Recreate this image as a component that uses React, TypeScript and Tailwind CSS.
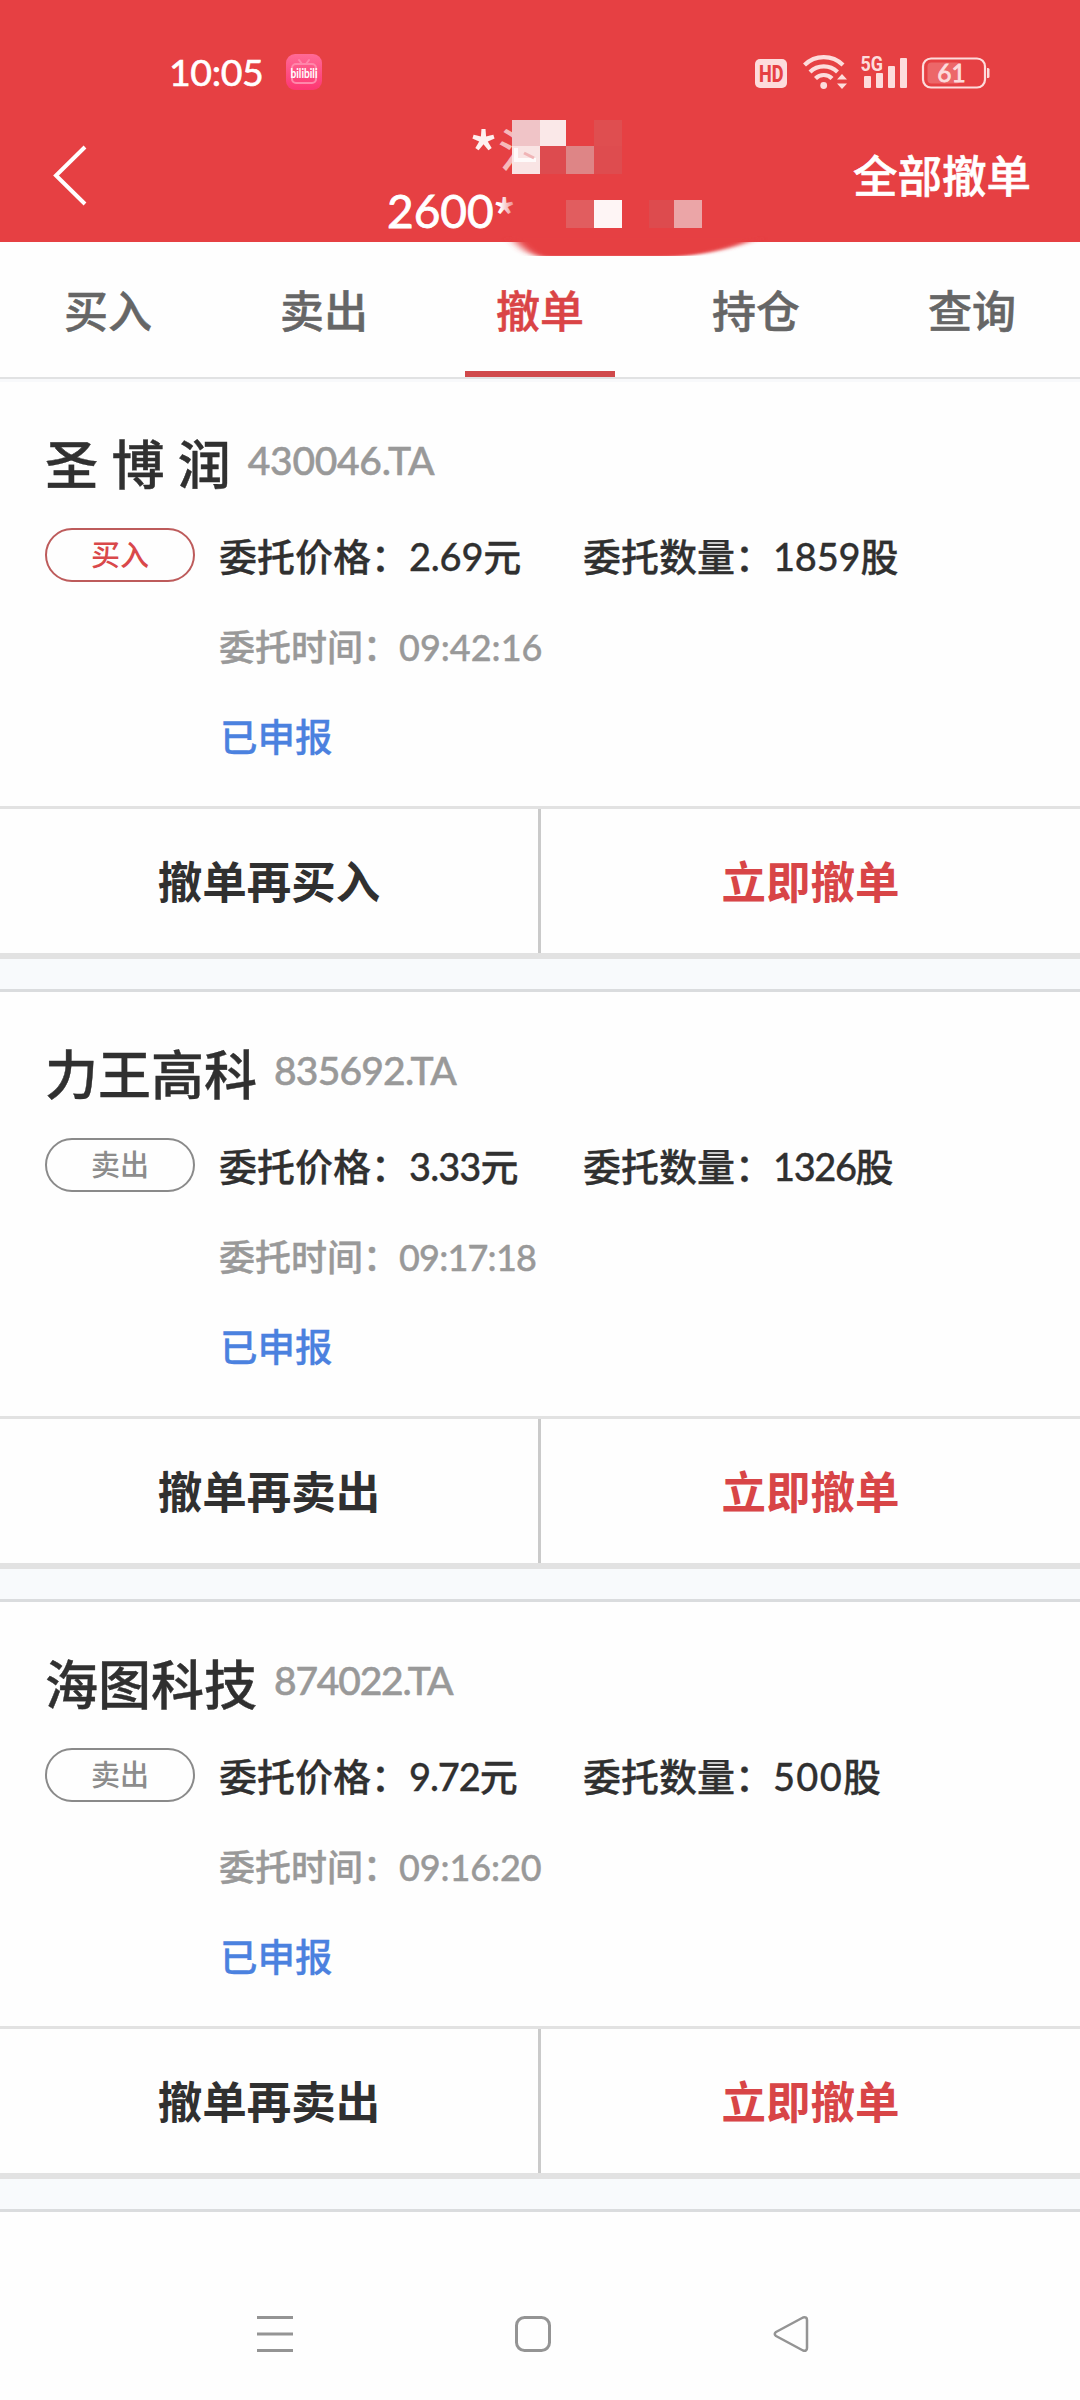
import React from 'react';

interface Order {
  name: string;
  code: string;
  side: '买入' | '卖出';
  price: string;
  quantity: string;
  time: string;
  tracking: { code: string; price: string; quantity: string; time: string };
}

const ORDERS: Order[] = [
  {
    name: '圣 博 润', code: '430046.TA', side: '买入', price: '2.69元', quantity: '1859股', time: '09:42:16',
    tracking: { code: 'tracking-[-0.3px]', price: 'tracking-[-0.2px]', quantity: 'tracking-[-0.2px]', time: 'tracking-normal' },
  },
  {
    name: '力王高科', code: '835692.TA', side: '卖出', price: '3.33元', quantity: '1326股', time: '09:17:18',
    tracking: { code: 'tracking-[-0.8px]', price: 'tracking-[-0.9px]', quantity: 'tracking-[-1.4px]', time: 'tracking-[-0.8px]' },
  },
  {
    name: '海图科技', code: '874022.TA', side: '卖出', price: '9.72元', quantity: '500股', time: '09:16:20',
    tracking: { code: 'tracking-[-1.2px]', price: 'tracking-[-1.1px]', quantity: 'tracking-[1.3px]', time: 'tracking-[-0.1px]' },
  },
];

const TABS = ['买入', '卖出', '撤单', '持仓', '查询'];
const ACTIVE_TAB = '撤单';

const StatusBar: React.FC = () => (
  <div className="flex h-[102px] items-center pt-[43px] pl-[169px] pr-[90px]">
    <span className="w-[117px] text-[37.500px] leading-[56px] tracking-[-0.4px] [-webkit-text-stroke:0.6px] -mt-[2px]">10:05</span>
    <svg className="mb-[1px] overflow-visible" width="36" height="36" viewBox="0 0 36 36">
      <defs>
        <linearGradient id="app" x1="0" y1="0" x2="0" y2="1">
          <stop offset="0" stopColor="#ff6a96" />
          <stop offset="1" stopColor="#fd3672" />
        </linearGradient>
      </defs>
      <rect width="36" height="36" rx="9" fill="url(#app)" />
      <g fill="none" stroke="#ff86aa" strokeWidth="2" strokeLinecap="round">
        <rect x="6" y="10" width="24" height="19" rx="4" />
        <path d="M13 6l3 4M23 6l-3 4" />
      </g>
      <text x="4.500" y="24" textLength="27" lengthAdjust="spacingAndGlyphs" fontSize="13" fontWeight="700" fill="#fff">bilibili</text>
    </svg>
    <svg className="ml-auto overflow-visible" width="236" height="40" viewBox="0 0 236 40" fill="#fddcdc">
      <rect x="1" y="6" width="32" height="29" rx="5" />
      <text x="5" y="29" textLength="24.500" lengthAdjust="spacingAndGlyphs" fontFamily="Roboto" fontSize="23" fontWeight="800" fill="#e64043">HD</text>
      <g fill="none" stroke="#fddcdc" strokeWidth="4.200">
        <path d="M50.500 12a27.500 27.500 0 0 1 38.500 0" />
        <path d="M56 19a19.500 19.500 0 0 1 27.500 0" />
        <path d="M61.500 25.500a11.500 11.500 0 0 1 16.500 0" />
      </g>
      <circle cx="69.700" cy="32.500" r="3.400" />
      <path d="M83 26.500l5-5.500 5 5.500zM83 30.500l5 5.500 5-5.500z" />
      <text x="106.500" y="17.500" textLength="22.500" lengthAdjust="spacingAndGlyphs" fontFamily="Roboto" fontSize="21" fontWeight="700">5G</text>
      <rect x="110" y="23" width="7" height="12" rx="1" />
      <rect x="122" y="20" width="7" height="15" rx="1" />
      <rect x="134" y="13" width="7" height="22" rx="1" />
      <rect x="146" y="5" width="7" height="30" rx="1" />
      <rect x="169" y="5.500" width="62" height="29" rx="8" fill="none" stroke="#fddcdc" strokeWidth="2.200" />
      <rect x="173.500" y="9.500" width="33" height="21" rx="4" fill="#ec6769" />
      <path d="M233 15h1q1.500 0 1.500 1.500v7q0 1.500-1.500 1.500h-1z" />
      <text x="197.500" y="28.500" textAnchor="middle" fontSize="24.500" stroke="#fddcdc" strokeWidth="0.8">61</text>
    </svg>
  </div>
);

const AccountMosaic: React.FC = () => (
  <svg className="absolute left-[500px] top-[110px]" width="270" height="146" viewBox="500 110 270 146">
    <defs>
      <filter id="soft" x="-10%" y="-60%" width="120%" height="220%">
        <feGaussianBlur stdDeviation="6 1" />
      </filter>
      <linearGradient id="smudge" x1="0" y1="0" x2="1" y2="0">
        <stop offset="0" stopColor="#e64043" stopOpacity="0" />
        <stop offset="1" stopColor="#e64043" />
      </linearGradient>
    </defs>
    <path d="M512 238H758Q715 256 664 257H545Q529 257 512 238z" fill="#e64043" filter="url(#soft)" />
    <rect x="500" y="190" width="22" height="42" fill="url(#smudge)" />
    <rect x="512" y="120" width="28" height="26" fill="#f0c4c7" />
    <rect x="540" y="120" width="26" height="26" fill="#fae8e8" />
    <rect x="594" y="120" width="28" height="26" fill="#df4e50" />
    <rect x="512" y="146" width="28" height="28" fill="#f9e4e4" />
    <rect x="540" y="146" width="26" height="28" fill="#dd4b4f" />
    <rect x="566" y="146" width="28" height="28" fill="#de8586" />
    <rect x="594" y="146" width="28" height="28" fill="#de4c4f" />
    <path d="M516 148V160H536" fill="none" stroke="#fff" strokeWidth="4" opacity="0.8" />
    <path d="M524 153l10 5" fill="none" stroke="#f0b4b6" strokeWidth="3" />
    <rect x="566" y="200" width="28" height="28" fill="#e15d5f" />
    <rect x="594" y="200" width="28" height="28" fill="#fef5f5" />
    <rect x="649" y="200" width="25" height="28" fill="#dd4b4e" />
    <rect x="674" y="200" width="28" height="28" fill="#eba5a7" />
  </svg>
);

const Header: React.FC = () => (
  <header className="relative h-[242px] bg-[#e64043] text-white">
    <StatusBar />
    <div className="flex h-[140px] pl-[52px] pr-[49px]">
      <svg className="mt-[43px] shrink-0" width="36" height="62" viewBox="0 0 36 62" fill="none" stroke="#fff" strokeWidth="4">
        <path d="M33 2L4 30.500L33 59" />
      </svg>
      <div className="ml-[299px] flex-1">
        <div className="flex h-[78px] pl-[82px] pt-[9px]">
          <span className="w-[29px] font-['Noto_Sans_CJK_SC'] text-[60px] font-medium leading-[80px] text-[#fef0f0]">*</span>
          <span className="text-[46px] font-medium leading-[76px] text-[#f6b9ba]">氵</span>
        </div>
        <div className="-mt-[1px] flex leading-[64px]">
          <span className="text-[46px] [-webkit-text-stroke:0.8px]">2600</span>
          <span className="-ml-[1px] mt-[3px] font-['Noto_Sans_CJK_SC'] text-[48px] font-medium">*</span>
        </div>
      </div>
      <button className="mt-[39px] h-[70px] text-[44.500px] font-medium leading-[70px] [-webkit-text-stroke:0.6px]">全部撤单</button>
    </div>
    <AccountMosaic />
  </header>
);

const Tabs: React.FC = () => (
  <nav className="grid h-[140px] grid-cols-5 border-b-[3px] border-[#f8f9fb]">
    {TABS.map((tab) => (
      <div
        key={tab}
        className={`flex flex-col items-center border-b-2 border-[#e1e2e3] text-[44px] font-medium [-webkit-text-stroke:0.5px] ${tab === ACTIVE_TAB ? 'text-[#da4446]' : 'text-[#666666]'}`}
      >
        <span className="flex-1 pt-[36px] leading-[66px]">{tab}</span>
        {tab === ACTIVE_TAB && <span className="h-[6px] w-[150px] bg-[#d0494b]" />}
      </div>
    ))}
  </nav>
);

const OrderCard: React.FC<{ order: Order }> = ({ order }) => (
  <section className="h-[610px]">
    <div className="h-[424px] pl-[45px] font-medium text-[#303030]">
      <div className="flex items-center pt-[43px]">
        <h2 className="text-[53px] leading-[80px] [-webkit-text-stroke:0.4px]">{order.name}</h2>
        <span className={`-mt-[11px] ml-[17px] text-[39px] leading-[80px] text-[#999999] [-webkit-text-stroke:0.5px] ${order.tracking.code}`}>{order.code}</span>
      </div>
      <div className="mt-[20px] flex h-[60px] items-center">
        <span
          className={`flex h-[54px] w-[150px] items-center justify-center rounded-full border-2 text-[29px] ${order.side === '买入' ? 'border-[#bd5b5b] text-[#d9484a]' : 'border-[#8a8a8a] text-[#8c8c8c]'}`}
        >
          {order.side}
        </span>
        <div className="ml-[24px] mt-[2px] flex w-[364px] text-[38px] [-webkit-text-stroke:0.3px]">
          <span>委托价格：</span>
          <span className={order.tracking.price}>{order.price}</span>
        </div>
        <div className="mt-[2px] flex text-[38px] [-webkit-text-stroke:0.3px]">
          <span>委托数量：</span>
          <span className={order.tracking.quantity}>{order.quantity}</span>
        </div>
      </div>
      <div className="ml-[174px] mt-[32px] flex h-[60px] items-center text-[36px] text-[#999999] [-webkit-text-stroke:0.4px]">
        <span>委托时间：</span>
        <span className={order.tracking.time}>{order.time}</span>
      </div>
      <div className="ml-[175px] mt-[30px] flex h-[60px] items-center text-[37.500px] text-[#4b81df] [-webkit-text-stroke:0.3px]">已申报</div>
    </div>
    <div className="grid h-[153px] grid-cols-[541px_539px] border-b-[6px] border-t-[3px] border-[#e2e2e2] text-[44.500px] font-bold">
      <button className="border-r-[3px] border-[#cacaca] pt-[2px] text-[#303030]">撤单再{order.side}</button>
      <button className="pt-[2px] text-[#d84547]">立即撤单</button>
    </div>
    <div className="h-[33px] border-b-[3px] border-[#dadcde] bg-[#f8fafc]" />
  </section>
);

const SystemNav: React.FC = () => (
  <footer className="flex items-center justify-between pl-[256px] pr-[270px] pt-[103px]">
    <svg width="38" height="38" viewBox="0 0 38 38" stroke="#949494" strokeWidth="3" fill="none">
      <path d="M1 2.500H37M1 19H37M1 35.500H37" />
    </svg>
    <svg width="38" height="38" viewBox="0 0 38 38" stroke="#949494" strokeWidth="3" fill="none">
      <rect x="2.500" y="2.500" width="33" height="33" rx="8" />
    </svg>
    <svg width="38" height="38" viewBox="0 0 38 38" stroke="#949494" strokeWidth="2.500" fill="none" strokeLinejoin="round">
      <path d="M4 17L31 2.500Q35 1.500 35 5V33Q35 36.500 31 35.500L4 21Q1.500 19 4 17z" />
    </svg>
  </footer>
);

const App: React.FC = () => (
  <div className="h-[2400px] w-[1080px] overflow-hidden bg-[#fefefe] font-['Lato','Noto_Sans_CJK_SC',sans-serif]">
    <Header />
    <Tabs />
    <main>
      {ORDERS.map((order) => (
        <OrderCard key={order.code} order={order} />
      ))}
    </main>
    <SystemNav />
  </div>
);

export default App;
